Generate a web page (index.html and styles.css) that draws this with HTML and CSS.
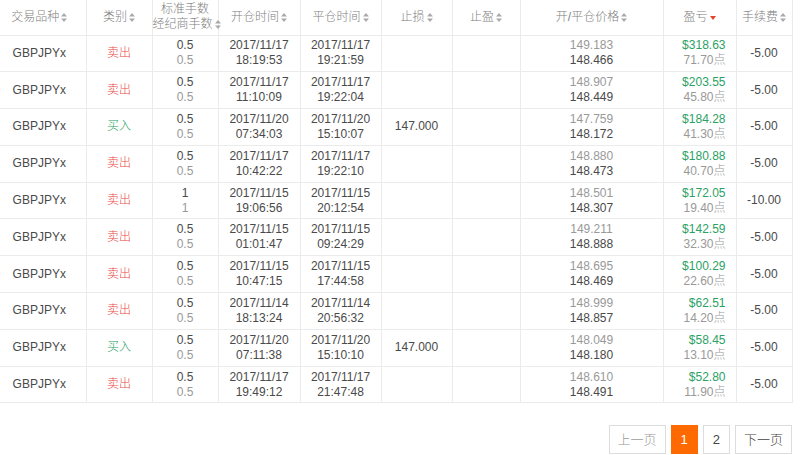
FILE: index.html
```html
<!DOCTYPE html>
<html lang="zh-CN">
<head>
<meta charset="utf-8">
<title>交易记录</title>
<link rel="stylesheet" href="styles.css">
</head>
<body>
<div class="page">
  <table class="orders">
    <colgroup>
      <col class="c1"><col class="c2"><col class="c3"><col class="c4"><col class="c5">
      <col class="c6"><col class="c7"><col class="c8"><col class="c9"><col class="c10">
    </colgroup>
    <thead>
      <tr>
        <th class="first">交易品种<svg class="sort" viewBox="0 0 6 9"><path d="M3 0L6 3.5H0Z M3 9L6 5.5H0Z"/></svg></th>
        <th>类别<svg class="sort" viewBox="0 0 6 9"><path d="M3 0L6 3.5H0Z M3 9L6 5.5H0Z"/></svg></th>
        <th class="two">标准手数<br>经纪商手数<svg class="sort" viewBox="0 0 6 9"><path d="M3 0L6 3.5H0Z M3 9L6 5.5H0Z"/></svg></th>
        <th>开仓时间<svg class="sort" viewBox="0 0 6 9"><path d="M3 0L6 3.5H0Z M3 9L6 5.5H0Z"/></svg></th>
        <th>平仓时间<svg class="sort" viewBox="0 0 6 9"><path d="M3 0L6 3.5H0Z M3 9L6 5.5H0Z"/></svg></th>
        <th>止损<svg class="sort" viewBox="0 0 6 9"><path d="M3 0L6 3.5H0Z M3 9L6 5.5H0Z"/></svg></th>
        <th>止盈<svg class="sort" viewBox="0 0 6 9"><path d="M3 0L6 3.5H0Z M3 9L6 5.5H0Z"/></svg></th>
        <th>开/平仓价格<svg class="sort" viewBox="0 0 6 9"><path d="M3 0L6 3.5H0Z M3 9L6 5.5H0Z"/></svg></th>
        <th>盈亏<svg class="sort active" viewBox="0 0 6 9"><path d="M0 3H6L3 7Z"/></svg></th>
        <th>手续费<svg class="sort" viewBox="0 0 6 9"><path d="M3 0L6 3.5H0Z M3 9L6 5.5H0Z"/></svg></th>
      </tr>
    </thead>
    <tbody>
      <tr>
        <td class="first">GBPJPYx</td><td class="sell">卖出</td>
        <td>0.5<br><span class="muted">0.5</span></td>
        <td>2017/11/17<br>18:19:53</td><td>2017/11/17<br>19:21:59</td>
        <td></td><td></td>
        <td><span class="muted">149.183</span><br>148.466</td>
        <td class="pl"><span class="gain">$318.63</span><br><span class="muted">71.70点</span></td>
        <td>-5.00</td>
      </tr>
      <tr>
        <td class="first">GBPJPYx</td><td class="sell">卖出</td>
        <td>0.5<br><span class="muted">0.5</span></td>
        <td>2017/11/17<br>11:10:09</td><td>2017/11/17<br>19:22:04</td>
        <td></td><td></td>
        <td><span class="muted">148.907</span><br>148.449</td>
        <td class="pl"><span class="gain">$203.55</span><br><span class="muted">45.80点</span></td>
        <td>-5.00</td>
      </tr>
      <tr>
        <td class="first">GBPJPYx</td><td class="buy">买入</td>
        <td>0.5<br><span class="muted">0.5</span></td>
        <td>2017/11/20<br>07:34:03</td><td>2017/11/20<br>15:10:07</td>
        <td>147.000</td><td></td>
        <td><span class="muted">147.759</span><br>148.172</td>
        <td class="pl"><span class="gain">$184.28</span><br><span class="muted">41.30点</span></td>
        <td>-5.00</td>
      </tr>
      <tr>
        <td class="first">GBPJPYx</td><td class="sell">卖出</td>
        <td>0.5<br><span class="muted">0.5</span></td>
        <td>2017/11/17<br>10:42:22</td><td>2017/11/17<br>19:22:10</td>
        <td></td><td></td>
        <td><span class="muted">148.880</span><br>148.473</td>
        <td class="pl"><span class="gain">$180.88</span><br><span class="muted">40.70点</span></td>
        <td>-5.00</td>
      </tr>
      <tr>
        <td class="first">GBPJPYx</td><td class="sell">卖出</td>
        <td>1<br><span class="muted">1</span></td>
        <td>2017/11/15<br>19:06:56</td><td>2017/11/15<br>20:12:54</td>
        <td></td><td></td>
        <td><span class="muted">148.501</span><br>148.307</td>
        <td class="pl"><span class="gain">$172.05</span><br><span class="muted">19.40点</span></td>
        <td>-10.00</td>
      </tr>
      <tr>
        <td class="first">GBPJPYx</td><td class="sell">卖出</td>
        <td>0.5<br><span class="muted">0.5</span></td>
        <td>2017/11/15<br>01:01:47</td><td>2017/11/15<br>09:24:29</td>
        <td></td><td></td>
        <td><span class="muted">149.211</span><br>148.888</td>
        <td class="pl"><span class="gain">$142.59</span><br><span class="muted">32.30点</span></td>
        <td>-5.00</td>
      </tr>
      <tr>
        <td class="first">GBPJPYx</td><td class="sell">卖出</td>
        <td>0.5<br><span class="muted">0.5</span></td>
        <td>2017/11/15<br>10:47:15</td><td>2017/11/15<br>17:44:58</td>
        <td></td><td></td>
        <td><span class="muted">148.695</span><br>148.469</td>
        <td class="pl"><span class="gain">$100.29</span><br><span class="muted">22.60点</span></td>
        <td>-5.00</td>
      </tr>
      <tr>
        <td class="first">GBPJPYx</td><td class="sell">卖出</td>
        <td>0.5<br><span class="muted">0.5</span></td>
        <td>2017/11/14<br>18:13:24</td><td>2017/11/14<br>20:56:32</td>
        <td></td><td></td>
        <td><span class="muted">148.999</span><br>148.857</td>
        <td class="pl"><span class="gain">$62.51</span><br><span class="muted">14.20点</span></td>
        <td>-5.00</td>
      </tr>
      <tr>
        <td class="first">GBPJPYx</td><td class="buy">买入</td>
        <td>0.5<br><span class="muted">0.5</span></td>
        <td>2017/11/20<br>07:11:38</td><td>2017/11/20<br>15:10:10</td>
        <td>147.000</td><td></td>
        <td><span class="muted">148.049</span><br>148.180</td>
        <td class="pl"><span class="gain">$58.45</span><br><span class="muted">13.10点</span></td>
        <td>-5.00</td>
      </tr>
      <tr>
        <td class="first">GBPJPYx</td><td class="sell">卖出</td>
        <td>0.5<br><span class="muted">0.5</span></td>
        <td>2017/11/17<br>19:49:12</td><td>2017/11/17<br>21:47:48</td>
        <td></td><td></td>
        <td><span class="muted">148.610</span><br>148.491</td>
        <td class="pl"><span class="gain">$52.80</span><br><span class="muted">11.90点</span></td>
        <td>-5.00</td>
      </tr>
    </tbody>
  </table>
  <div class="pager">
    <span class="pg text disabled">上一页</span>
    <span class="pg current">1</span>
    <span class="pg">2</span>
    <span class="pg text">下一页</span>
  </div>
</div>
</body>
</html>
```

FILE: styles.css
```css
* { box-sizing: border-box; }
html, body {
  margin: 0;
  padding: 0;
  background: #fff;
}
body {
  font-family: "Liberation Sans", "Noto Sans CJK SC", sans-serif;
  font-size: 12px;
  font-weight: 300;
  color: #4a4a4a;
}
.page {
  width: 792px;
}
.orders {
  width: 792px;
  border-collapse: collapse;
  table-layout: fixed;
}
.c1 { width: 86px; }
.c2 { width: 66px; }
.c3 { width: 66px; }
.c4 { width: 82px; }
.c5 { width: 81px; }
.c6 { width: 71px; }
.c7 { width: 68px; }
.c8 { width: 143px; }
.c9 { width: 73px; }
.c10 { width: 56px; }

.orders th,
.orders td {
  text-align: center;
  vertical-align: middle;
  padding: 0;
  line-height: 15px;
  border-bottom: 1px solid #ebebeb;
  border-right: 1px solid #ebebeb;
}
.orders th {
  height: 35px;
  font-weight: 300;
  color: #808080;
  white-space: nowrap;
}
.orders td {
  height: 36.8px;
}
.orders .first { padding-right: 7px; }
.sort {
  width: 6px;
  height: 9px;
  margin-left: 2px;
  vertical-align: -1px;
  fill: #aaa;
}
.sort.active { fill: #e8412c; }
.muted { color: #999; }
.sell { color: #ea4a45; }
.buy { color: #2ba265; }
.gain { color: #2ba265; }
.orders td.pl {
  text-align: right;
  padding-right: 10px;
}
.pager {
  display: flex;
  justify-content: flex-end;
  gap: 5px;
  margin-top: 22px;
}
.pg {
  height: 29px;
  line-height: 27px;
  min-width: 27px;
  padding: 0 9px;
  text-align: center;
  border: 1px solid #ddd;
  font-size: 13px;
  color: #444;
  background: #fff;
}
.pg.text { padding: 0 8px; }
.pg.disabled { color: #999; }
.pg.current {
  background: #ff6a00;
  border-color: #ff6a00;
  color: #fff;
}
```
